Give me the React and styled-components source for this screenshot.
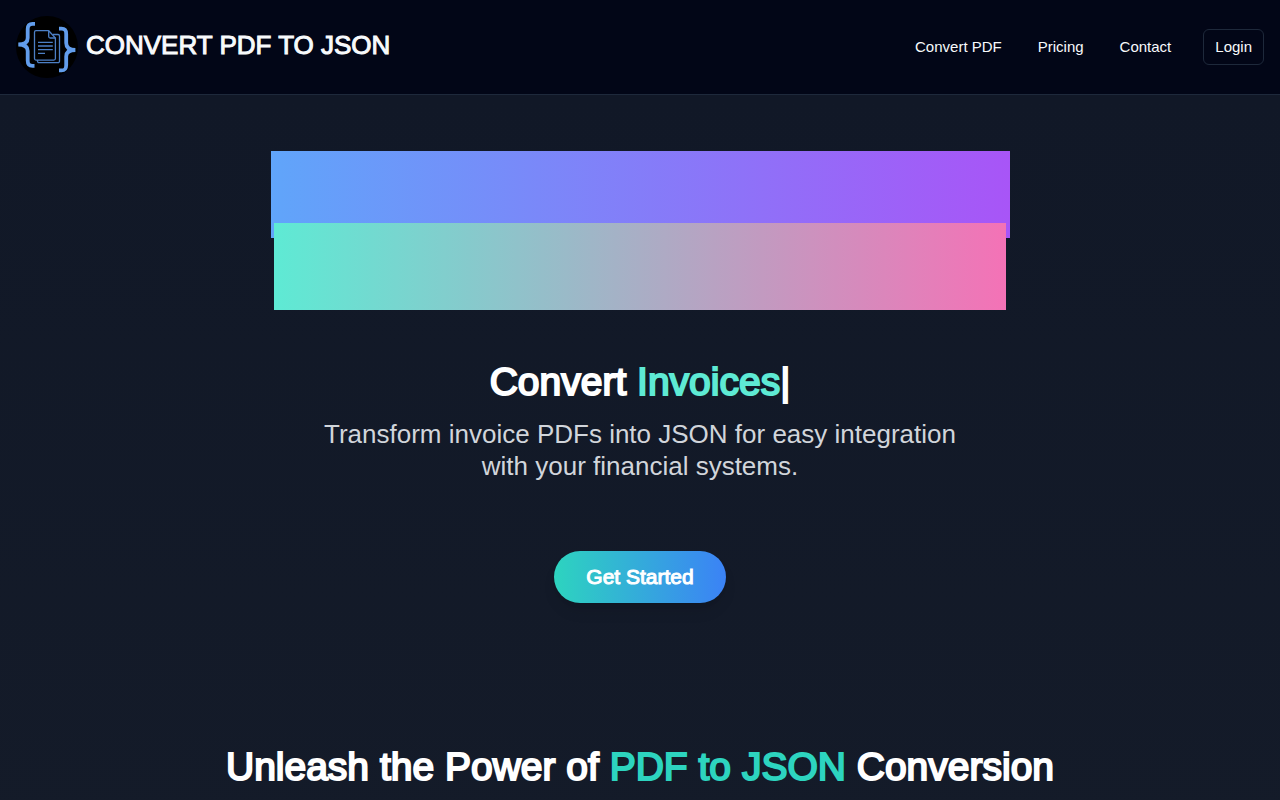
import React from 'react';
import styled, { createGlobalStyle } from 'styled-components';

const GlobalStyle = createGlobalStyle`
  *, *::before, *::after {
    box-sizing: border-box;
  }

  body {
    margin: 0;
    background-color: #111827;
    color: #fff;
    font-family: "Liberation Sans", Arial, sans-serif;
  }

  h1, h2, p {
    margin: 0;
  }
`;

const Header = styled.header`
  display: flex;
  align-items: center;
  justify-content: space-between;
  padding: 16px;
  background-color: #020617;
  border-bottom: 1px solid #1e293b;
`;

const Brand = styled.a`
  display: flex;
  align-items: center;
  gap: 8px;
  color: #f8fafc;
  text-decoration: none;
`;

const LogoMark = styled.svg`
  width: 62px;
  height: 62px;
`;

const BrandName = styled.span`
  padding-bottom: 4px;
  font-size: 26px;
  line-height: 32px;
  -webkit-text-stroke: 1px;
`;

const Nav = styled.nav`
  display: flex;
  align-items: center;
  gap: 4px;
`;

const NavLink = styled.a`
  padding: 8px 16px;
  color: #f8fafc;
  font-size: 15px;
  line-height: 20px;
  text-decoration: none;
`;

const LoginButton = styled.button`
  height: 36px;
  margin-left: 12px;
  padding: 0 11px;
  background-color: transparent;
  border: 1px solid #1e293b;
  border-radius: 6px;
  color: #f8fafc;
  font-family: inherit;
  font-size: 15px;
  line-height: 20px;
  cursor: pointer;
`;

const Main = styled.main`
  background-image: linear-gradient(to bottom, #111827, #141b29);
`;

const Hero = styled.section`
  display: flex;
  flex-direction: column;
  align-items: center;
  padding: 56px 16px 0;
  text-align: center;
`;

const Banner = styled.div`
  display: flex;
  flex-direction: column;
  align-items: center;
  width: 100%;
  margin-bottom: 52px;
`;

const BannerBar = styled.div`
  width: ${(props) => props.$width};
  max-width: 100%;
  height: 87px;
  background-image: linear-gradient(to right, ${(props) => props.$colors});

  & + & {
    margin-top: -15px;
  }
`;

const Heading = styled.h2`
  font-size: 39px;
  font-weight: 400;
  line-height: 40px;
  -webkit-text-stroke: 2px;
`;

const Highlight = styled.span`
  color: ${(props) => props.$color};
`;

const Description = styled.p`
  max-width: 672px;
  margin-top: 16px;
  color: #d1d5db;
  font-size: 26px;
  line-height: 32px;
`;

const StartButton = styled.button`
  margin-top: 69px;
  padding: 12px 32px;
  background-image: linear-gradient(to right, #2dd4bf, #3b82f6);
  border: none;
  border-radius: 26px;
  box-shadow: 0 10px 15px -3px rgba(0, 0, 0, 0.1), 0 4px 6px -4px rgba(0, 0, 0, 0.1);
  color: #fff;
  font-family: inherit;
  font-size: 21px;
  line-height: 28px;
  -webkit-text-stroke: 1px;
  cursor: pointer;
`;

const Features = styled.section`
  padding: 144px 16px 64px;
  text-align: center;
`;

function Logo() {
  return (
    <LogoMark viewBox="0 0 62 62" fill="none" aria-hidden="true">
      <circle cx="31" cy="31" r="31" fill="#000" />
      <g stroke="#629deb" strokeWidth="3.8">
        <path d="M19 7.8h-2.5c-3.6 0-4.8 1.7-4.8 5.2v9c0 4-2.7 6.5-9.4 6.5 6.7 0 9.4 2.5 9.4 6.5v9.5c0 3.7 1.2 5.4 4.800 5.400h2" />
        <path d="M43 12.700h2.500c3.600 0 4.700 1.700 4.700 5.200v9.200c0 4.400 2.600 6.900 9.200 6.900-6.600 0-9.200 2.500-9.200 6.500v8.500c0 3.700-1.100 5.400-4.700 5.400H43" />
      </g>
      <g stroke="#4c7fc4" strokeWidth="1.3">
        <path d="M20 14.700h12.700l6.700 7.300v20.600a1.500 1.500 0 0 1-1.500 1.500H20a1.500 1.500 0 0 1-1.500-1.500V16.200a1.500 1.500 0 0 1 1.500-1.500z" />
        <path d="M32.700 14.700v5.800a1.500 1.500 0 0 0 1.500 1.500h5.200" />
        <path d="M37 18.500h5a1.500 1.500 0 0 1 1.500 1.500v25.200a1.500 1.500 0 0 1-1.500 1.500H23a1.500 1.500 0 0 1-1.500-1.500V44" />
        <path d="M22 26.300h14.800M22 30h14.800M22 33.600h14.800M22 37.400h7" />
      </g>
    </LogoMark>
  );
}

function App() {
  return (
    <>
      <GlobalStyle />
      <Header>
        <Brand href="/">
          <Logo />
          <BrandName>CONVERT PDF TO JSON</BrandName>
        </Brand>
        <Nav>
          <NavLink href="/convert">Convert PDF</NavLink>
          <NavLink href="/pricing">Pricing</NavLink>
          <NavLink href="/contact">Contact</NavLink>
          <LoginButton type="button">Login</LoginButton>
        </Nav>
      </Header>
      <Main>
        <Hero>
          <Banner>
            <BannerBar $width="739px" $colors="#60a5fa, #a855f7" />
            <BannerBar $width="732px" $colors="#5eead4, #f472b6" />
          </Banner>
          <Heading>
            Convert <Highlight $color="#5eead4">Invoices</Highlight>|
          </Heading>
          <Description>
            Transform invoice PDFs into JSON for easy integration with your financial systems.
          </Description>
          <StartButton type="button">Get Started</StartButton>
        </Hero>
        <Features>
          <Heading>
            Unleash the Power of <Highlight $color="#2dd4bf">PDF to JSON</Highlight> Conversion
          </Heading>
        </Features>
      </Main>
    </>
  );
}

export default App;
